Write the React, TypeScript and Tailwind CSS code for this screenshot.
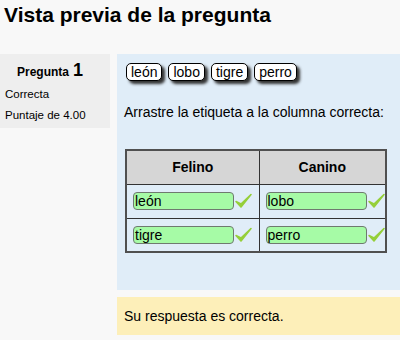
import React from 'react'

const choices = ['león', 'lobo', 'tigre', 'perro']

const rows = [
  ['león', 'lobo'],
  ['tigre', 'perro'],
]

function Tick() {
  return (
    <svg width="17" height="16" viewBox="0 0 17 16" className="shrink-0">
      <path d="M1 8.5 L6 14 L16 1.5 L6 11 Z" fill="#95cf3a" stroke="#95cf3a" strokeWidth="1.6" strokeLinejoin="round" />
    </svg>
  )
}

function Drop({ label }: { label: string }) {
  return (
    <div className="flex items-center gap-[1px]">
      <div className="w-[101px] h-[18px] rounded-[4px] border border-[#6f7a6f] bg-[#a6fba6] pl-[1px] text-[14px] leading-[16px] text-black">
        {label}
      </div>
      <Tick />
    </div>
  )
}

export default function App() {
  return (
    <div
      className="w-[400px] h-[340px] bg-[#f8f8f8] text-black overflow-hidden"
      style={{ fontFamily: '"Liberation Sans", Arial, sans-serif' }}
    >
      <h1 className="text-[21px] font-bold leading-6 pl-[4px] pt-[3px]">Vista previa de la pregunta</h1>

      <div className="flex gap-[7px] mt-[27px]">
        <div className="w-[110px] h-[74px] shrink-0 bg-[#eeeeee] pt-[6px] text-[11.5px]">
          <div className="flex items-baseline justify-end pr-[27px] font-bold">
            <span className="text-[12px]">Pregunta</span>
            <span className="text-[18px] leading-5 ml-[4px]">1</span>
          </div>
          <div className="pl-[5px] mt-[5px] leading-4">Correcta</div>
          <div className="pl-[5px] mt-[5px] leading-4">Puntaje de 4.00</div>
        </div>

        <div className="flex-1">
          <div className="h-[236px] bg-[#e0edf8] pl-[8px] pt-[9px]">
            <div className="flex gap-[6px] pl-[1px]">
              {choices.map((c) => (
                <div
                  key={c}
                  className="h-[18px] px-[4px] rounded-[5px] border border-black bg-white text-[14px] leading-4 shadow-[3px_3px_3px_#333]"
                >
                  {c}
                </div>
              ))}
            </div>

            <p className="mt-[23px] text-[14px] leading-4 -ml-[1px]">Arrastre la etiqueta a la columna correcta:</p>

            <table className="mt-[29px] w-[262px] border-collapse border-2 border-[#505050]">
              <thead>
                <tr className="h-[34px] bg-[#d6d6d6]">
                  <th className="w-[133px] border border-[#333] text-[14px] font-bold">Felino</th>
                  <th className="border border-[#333] text-[14px] font-bold">Canino</th>
                </tr>
              </thead>
              <tbody>
                {rows.map((r, i) => (
                  <tr key={i} className="h-[34px]">
                    {r.map((l) => (
                      <td key={l} className="border border-[#333] pl-[6px]">
                        <Drop label={l} />
                      </td>
                    ))}
                  </tr>
                ))}
              </tbody>
            </table>
          </div>

          <div className="mt-[7px] h-[38px] bg-[#fdefb9] pl-[7px] flex items-center text-[14px]">
            Su respuesta es correcta.
          </div>
        </div>
      </div>
    </div>
  )
}
